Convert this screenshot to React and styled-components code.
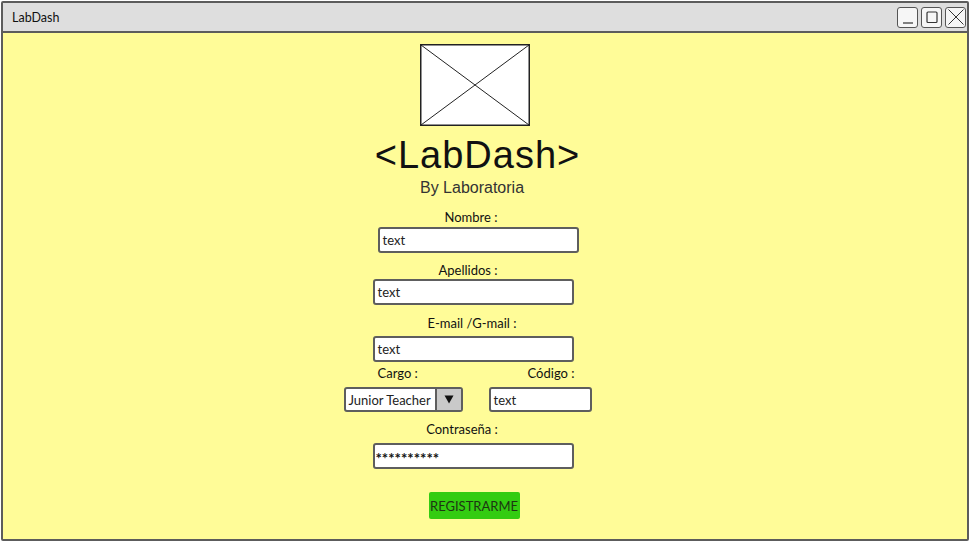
import styled, { createGlobalStyle } from "styled-components";

const GlobalStyle = createGlobalStyle`
  html, body {
    margin: 0;
    padding: 0;
    background: #ffffff;
  }
  body {
    font-family: Lato, "Open Sans", sans-serif;
    color: #222222;
  }
`;

const Window = styled.div`
  box-sizing: border-box;
  margin: 1px 0 0 1px;
  width: 968px;
  height: 540px;
  border: 2px solid #5c5c5c;
  border-radius: 2px;
  background: #fffc98;
  display: flex;
  flex-direction: column;
  overflow: hidden;
`;

const TitleBar = styled.div`
  height: 28px;
  border-bottom: 2px solid #5c5c5c;
  background: #dedede;
  display: flex;
  align-items: center;
  justify-content: space-between;
  padding: 0 1px 0 9px;
`;

const WindowTitle = styled.span`
  font-size: 12.5px;
  color: #111111;
`;

const WindowControls = styled.div`
  display: flex;
  gap: 3px;
`;

const WinButton = styled.div`
  box-sizing: border-box;
  width: 21px;
  height: 21px;
  border: 1.5px solid #555555;
  border-radius: 3px;
  background: #f6f6f6;
  display: flex;
  align-items: center;
  justify-content: center;
`;

const Main = styled.div`
  flex: 1;
  display: flex;
  flex-direction: column;
  align-items: center;
  padding: 11px 21px 0 0;
`;

const Title = styled.h1`
  margin: 10px 0 0 6px;
  font-family: "Liberation Sans", Arial, sans-serif;
  font-weight: normal;
  font-size: 38px;
  line-height: 38px;
  letter-spacing: 1px;
  color: #111111;
`;

const Subtitle = styled.h2`
  margin: 5px 5px 0 0;
  font-family: "Liberation Sans", Arial, sans-serif;
  font-weight: normal;
  font-size: 16px;
  line-height: 18px;
  color: #333333;
`;

const Form = styled.div`
  width: 262px;
  display: flex;
  flex-direction: column;
  align-items: flex-start;
`;

const Label = styled.div`
  box-sizing: border-box;
  width: ${(p) => p.$w || 201}px;
  margin: ${(p) => p.$top || 0}px 0 ${(p) => p.$gap || 0}px ${(p) => p.$x || 0}px;
  padding: 0 ${(p) => p.$pr || 0}px 0 ${(p) => p.$pl || 0}px;
  text-align: ${(p) => p.$align || "center"};
  font-size: 13px;
  line-height: 16px;
  color: #111111;
`;

const TextBox = styled.div`
  box-sizing: border-box;
  width: ${(p) => p.$w || 201}px;
  height: ${(p) => p.$h || 26}px;
  margin-left: ${(p) => p.$x || 0}px;
  padding-left: ${(p) => (p.$pad === undefined ? 3 : p.$pad)}px;
  border: 2px solid #5e5e5e;
  border-radius: 3px;
  background: #ffffff;
  display: flex;
  align-items: center;
  font-size: 13px;
  color: #222222;
`;

const Masked = styled.span`
  font-size: 15px;
  font-weight: bold;
  letter-spacing: 0;
  margin-top: 3px;
  color: #111111;
`;

const Row = styled.div`
  display: flex;
  align-items: flex-start;
  margin-top: 3px;
`;

const Column = styled.div`
  display: flex;
  flex-direction: column;
  margin-left: ${(p) => p.$x || 0}px;
`;

const Select = styled.div`
  box-sizing: border-box;
  width: 119px;
  height: 25px;
  border: 2px solid #5e5e5e;
  border-radius: 3px;
  background: #ffffff;
  display: flex;
  overflow: hidden;
`;

const SelectText = styled.div`
  flex: 1;
  padding-left: 3px;
  display: flex;
  align-items: center;
  font-size: 13px;
  color: #222222;
  white-space: nowrap;
`;

const SelectArrow = styled.div`
  width: 24px;
  border-left: 2px solid #5e5e5e;
  background: #c9c9c9;
  display: flex;
  align-items: center;
  justify-content: center;
`;

const SubmitButton = styled.button`
  margin: 23px 0 0 85px;
  width: 91px;
  height: 27px;
  border: none;
  border-radius: 2px;
  background: #33cc11;
  font-family: Lato, "Open Sans", sans-serif;
  font-size: 13px;
  color: #1d3612;
  padding: 0;
`;

function ImagePlaceholder() {
  return (
    <svg width="110" height="82" viewBox="0 0 110 82">
      <rect x="0.75" y="0.75" width="108.5" height="80.5" fill="#ffffff" stroke="#222" strokeWidth="1.5" />
      <line x1="1" y1="1" x2="109" y2="81" stroke="#222" strokeWidth="1" />
      <line x1="109" y1="1" x2="1" y2="81" stroke="#222" strokeWidth="1" />
    </svg>
  );
}

export default function App() {
  return (
    <>
      <GlobalStyle />
      <Window>
        <TitleBar>
          <WindowTitle>LabDash</WindowTitle>
          <WindowControls>
            <WinButton>
              <svg width="18" height="18" viewBox="0 0 18 18">
                <line x1="4" y1="15" x2="14" y2="15" stroke="#333" strokeWidth="1.2" />
              </svg>
            </WinButton>
            <WinButton>
              <svg width="18" height="18" viewBox="0 0 18 18">
                <rect x="4" y="4" width="10" height="10.5" rx="1" fill="none" stroke="#333" strokeWidth="1.2" />
              </svg>
            </WinButton>
            <WinButton>
              <svg width="18" height="18" viewBox="0 0 18 18">
                <path d="M1.5 1.5 L16.5 16.5 M16.5 1.5 L1.5 16.5" stroke="#333" strokeWidth="1" />
              </svg>
            </WinButton>
          </WindowControls>
        </TitleBar>
        <Main>
          <ImagePlaceholder />
          <Title>&lt;LabDash&gt;</Title>
          <Subtitle>By Laboratoria</Subtitle>
          <Form>
            <Label $top={12} $gap={2} $x={27}>Nombre :</Label>
            <TextBox $x={34}>text</TextBox>

            <Label $top={9} $gap={1} $x={24}>Apellidos :</Label>
            <TextBox $x={29}>text</TextBox>

            <Label $top={10} $gap={5} $x={28}>E-mail /G-mail :</Label>
            <TextBox $x={29}>text</TextBox>

            <Row>
              <Column>
                <Label $w={119} $align="left" $pl={34} $gap={6}>Cargo :</Label>
                <Select>
                  <SelectText>Junior Teacher</SelectText>
                  <SelectArrow>
                    <svg width="10" height="9" viewBox="0 0 10 9">
                      <path d="M0.5 0.5 L9.5 0.5 L5 8.5 Z" fill="#111" />
                    </svg>
                  </SelectArrow>
                </Select>
              </Column>
              <Column $x={26}>
                <Label $w={103} $align="right" $pr={17} $gap={6}>Código :</Label>
                <TextBox $w={103} $h={25}>text</TextBox>
              </Column>
            </Row>

            <Label $top={9} $gap={6} $x={18}>Contraseña :</Label>
            <TextBox $x={29} $pad={1}>
              <Masked>**********</Masked>
            </TextBox>

            <SubmitButton>REGISTRARME</SubmitButton>
          </Form>
        </Main>
      </Window>
    </>
  );
}
